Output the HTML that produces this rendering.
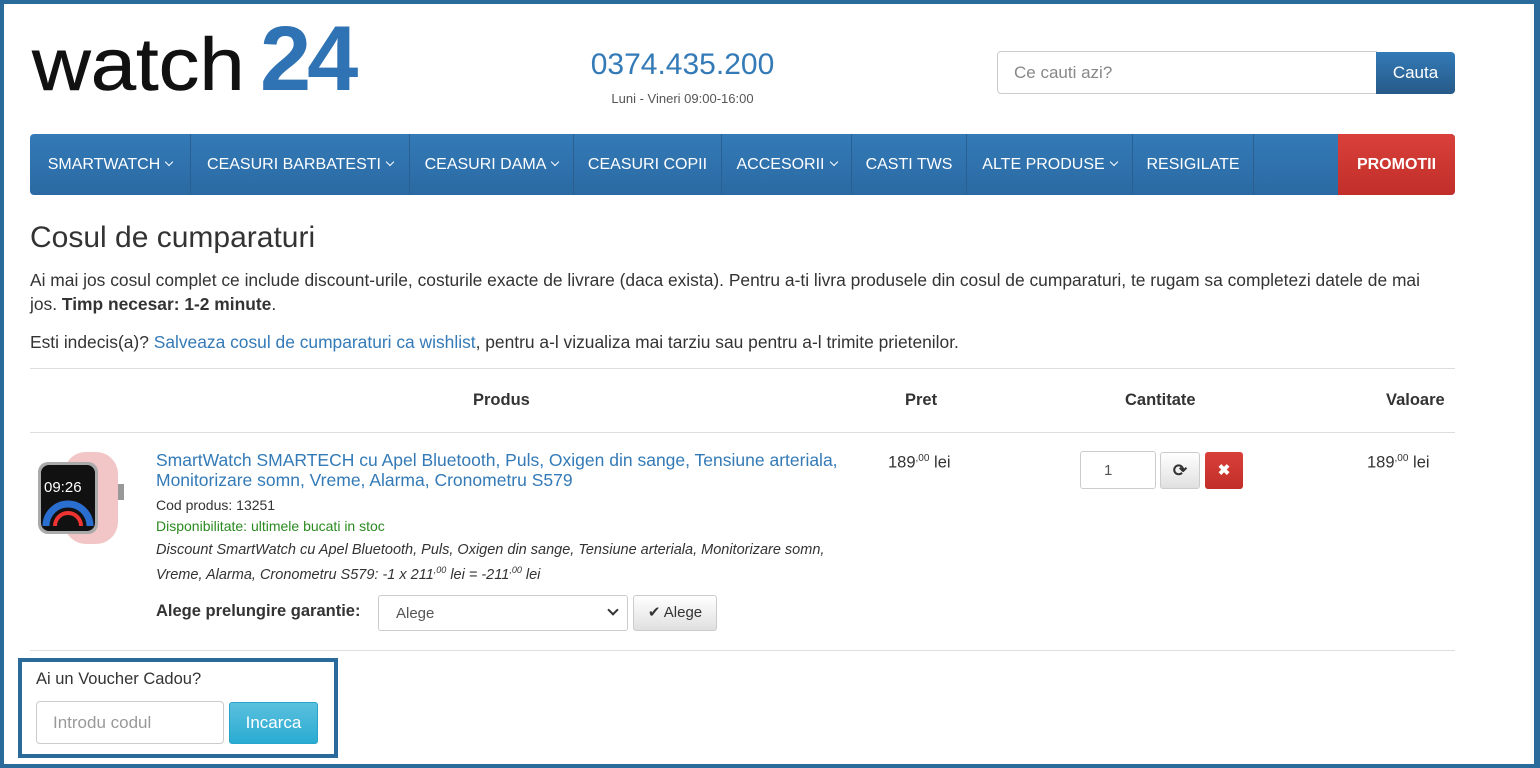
<!DOCTYPE html>
<html><head><meta charset="utf-8"><style>
*{box-sizing:border-box;margin:0;padding:0}
body{width:1540px;height:768px;overflow:hidden;background:#fff;font-family:"Liberation Sans",sans-serif;color:#333;position:relative;font-size:14px}
.frame{position:absolute;left:0;top:0;width:1540px;height:768px;border:4px solid #2b6b9b;border-right-width:6px;pointer-events:none;z-index:5}
.abs{position:absolute}
.nav{left:30px;top:134px;width:1425px;height:61px;border-radius:4px;background:linear-gradient(#337ab7,#2b6aa3);overflow:hidden}
.nav div{position:absolute;top:0;height:61px;line-height:61px;color:#fff;font-size:16px;border-right:1px solid #2a5f90;text-align:center}
.chev{display:inline-block;width:6px;height:6px;border-right:1.5px solid #fff;border-bottom:1.5px solid #fff;transform:rotate(45deg);margin-left:6px;position:relative;top:-4px}
a{color:#337ab7;text-decoration:none}
.btn{position:absolute;border-radius:3px;border:1px solid #ccc;background:linear-gradient(#fff,#e0e0e0)}
</style></head><body>
<div class="frame"></div>
<div class="abs" style="left:32px;top:25px;line-height:80px;white-space:nowrap"><span style="font-size:74px;color:#111;display:inline-block;transform:scaleX(1.1);transform-origin:left;-webkit-text-stroke:0.5px #111">watch</span></div>
<div class="abs" style="left:260px;top:9px;font-size:92px;font-weight:bold;color:#2f73b4;line-height:100px;letter-spacing:-4px">24</div>
<div class="abs" style="left:560px;top:48px;width:245px;text-align:center;color:#337ab7;font-size:30px">0374.435.200</div>
<div class="abs" style="left:560px;top:91px;width:245px;text-align:center;font-size:13px;color:#555">Luni - Vineri 09:00-16:00</div>
<div class="abs" style="left:997px;top:51px;width:380px;height:43px;border:1px solid #ccc;border-radius:4px 0 0 4px;padding:11px 16px;font-size:17px;color:#888">Ce cauti azi?</div>
<div class="abs" style="left:1376px;top:52px;width:79px;height:42px;border-radius:0 4px 4px 0;background:linear-gradient(#337ab7,#265a88);color:#fff;font-size:17px;text-align:center;line-height:41px">Cauta</div>
<div class="abs nav">
<div style="left:0;width:161px">SMARTWATCH<span class="chev"></span></div>
<div style="left:161px;width:219px">CEASURI BARBATESTI<span class="chev"></span></div>
<div style="left:380px;width:164px">CEASURI DAMA<span class="chev"></span></div>
<div style="left:544px;width:148px">CEASURI COPII</div>
<div style="left:692px;width:130px">ACCESORII<span class="chev"></span></div>
<div style="left:822px;width:115px">CASTI TWS</div>
<div style="left:937px;width:166px">ALTE PRODUSE<span class="chev"></span></div>
<div style="left:1103px;width:121px">RESIGILATE</div>
<div style="left:1308px;width:117px;background:linear-gradient(#d9403a,#c12e2a);font-weight:bold;border:none">PROMOTII</div>
</div>
<div class="abs" style="left:30px;top:221px;font-size:30px">Cosul de cumparaturi</div>
<div class="abs" style="left:30px;top:268px;width:1420px;font-size:17.4px;line-height:24px">Ai mai jos cosul complet ce include discount-urile, costurile exacte de livrare (daca exista). Pentru a-ti livra produsele din cosul de cumparaturi, te rugam sa completezi datele de mai jos. <b>Timp necesar: 1-2 minute</b>.</div>
<div class="abs" style="left:30px;top:331px;font-size:17.4px;line-height:22px">Esti indecis(a)? <a>Salveaza cosul de cumparaturi ca wishlist</a>, pentru a-l vizualiza mai tarziu sau pentru a-l trimite prietenilor.</div>
<div class="abs" style="left:30px;top:368px;width:1425px;border-top:1px solid #ddd"></div>
<div class="abs" style="left:30px;top:432px;width:1425px;border-top:1px solid #ddd"></div>
<div class="abs" style="left:30px;top:650px;width:1425px;border-top:1px solid #ddd"></div>
<div class="abs" style="left:473px;top:391px;font-size:16.5px;font-weight:bold">Produs</div>
<div class="abs" style="left:905px;top:391px;font-size:16.5px;font-weight:bold">Pret</div>
<div class="abs" style="left:1125px;top:391px;font-size:16.5px;font-weight:bold">Cantitate</div>
<div class="abs" style="left:1386px;top:391px;font-size:16.5px;font-weight:bold">Valoare</div>
<svg class="abs" style="left:34px;top:450px" width="94" height="96" viewBox="0 0 94 96">
<rect x="30" y="2" width="54" height="92" rx="22" fill="#f2c6c6"/>
<rect x="84" y="34" width="6" height="16" fill="#999"/>
<rect x="4" y="12" width="60" height="72" rx="10" fill="#aaa"/>
<rect x="7" y="15" width="54" height="66" rx="8" fill="#111"/>
<text x="10" y="42" fill="#fff" font-size="15" font-family="Liberation Sans">09:26</text>
<path d="M12 76 A22 22 0 0 1 56 76" stroke="#2a6fd0" stroke-width="7" fill="none"/>
<path d="M21 76 A13 13 0 0 1 47 76" stroke="#e33" stroke-width="4" fill="none"/>
</svg>
<div class="abs" style="left:156px;top:450px;width:700px;font-size:17.5px;line-height:20px;color:#337ab7">SmartWatch SMARTECH cu Apel Bluetooth, Puls, Oxigen din sange, Tensiune arteriala, Monitorizare somn, Vreme, Alarma, Cronometru S579</div>
<div class="abs" style="left:156px;top:497px;font-size:14px">Cod produs: 13251</div>
<div class="abs" style="left:156px;top:518px;font-size:14px;color:#2a8a1f">Disponibilitate: ultimele bucati in stoc</div>
<div class="abs" style="left:156px;top:540px;width:700px;font-size:14.5px;line-height:20px;font-style:italic">Discount SmartWatch cu Apel Bluetooth, Puls, Oxigen din sange, Tensiune arteriala, Monitorizare somn,<br>Vreme, Alarma, Cronometru S579: -1 x 211<sup style="font-size:9px">,00</sup> lei = -211<sup style="font-size:9px">,00</sup> lei</div>
<div class="abs" style="left:156px;top:602px;font-size:16.5px;font-weight:bold">Alege prelungire garantie:</div>
<div class="abs" style="left:378px;top:595px;width:250px;height:36px;border:1px solid #ccc;border-radius:3px;padding:9px 17px;font-size:15px;color:#555">Alege<span style="position:absolute;right:10px;top:10px;width:8px;height:8px;border-right:2px solid #333;border-bottom:2px solid #333;transform:rotate(45deg)"></span></div>
<div class="btn" style="left:633px;top:595px;width:84px;height:36px;font-size:15px;text-align:center;line-height:34px">✔ Alege</div>
<div class="abs" style="left:888px;top:453px;font-size:16.5px">189<sup style="font-size:10px">,00</sup> lei</div>
<div class="abs" style="left:1367px;top:453px;font-size:16.5px">189<sup style="font-size:10px">,00</sup> lei</div>
<div class="abs" style="left:1080px;top:451px;width:76px;height:38px;border:1px solid #ccc;border-radius:3px;padding:10px 23px;font-size:15px;color:#555">1</div>
<div class="btn" style="left:1160px;top:452px;width:40px;height:37px;text-align:center;line-height:35px;font-size:17px;font-weight:bold">⟳</div>
<div class="abs" style="left:1205px;top:452px;width:38px;height:37px;border-radius:3px;background:linear-gradient(#d9403a,#c12e2a);color:#fff;text-align:center;line-height:37px;font-size:15px;font-weight:bold">✖</div>
<div class="abs" style="left:18px;top:658px;width:320px;height:100px;border:4px solid #2b6b9b"></div>
<div class="abs" style="left:36px;top:670px;font-size:16.5px">Ai un Voucher Cadou?</div>
<div class="abs" style="left:36px;top:701px;width:188px;height:43px;border:1px solid #ccc;border-radius:4px;padding:11px 16px;font-size:17px;color:#999">Introdu codul</div>
<div class="abs" style="left:229px;top:702px;width:89px;height:42px;border-radius:3px;background:linear-gradient(#5bc0de,#2aabd2);color:#fff;font-size:17px;text-align:center;line-height:40px;border:1px solid #28a4c9">Incarca</div>
</body></html>
